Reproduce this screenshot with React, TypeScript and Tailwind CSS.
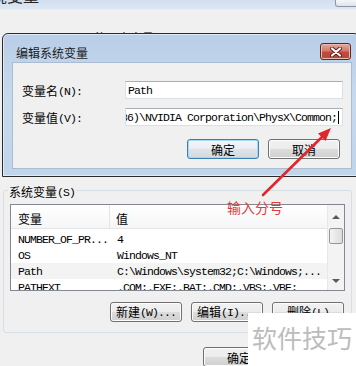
import React from "react";

const MONO = "font-['Liberation_Mono',monospace] text-[11.5px] tracking-[-0.9px]";
const CJK = "relative top-[1px] font-['Noto_Sans_CJK_SC',sans-serif] text-[12px]";

// Mixed text: CJK runs in a CJK face, Latin runs in a 6px-advance mono face
function T({ s, className = "" }: { s: string; className?: string }) {
  const parts = s.split(/([\u4e00-\u9fff]+)/).filter(Boolean);
  return (
    <span className={`whitespace-pre leading-[16px] ${className}`}>
      {parts.map((p, i) =>
        /[\u4e00-\u9fff]/.test(p) ? (
          <span key={i} className={CJK}>
            {p}
          </span>
        ) : (
          <span key={i} className={MONO}>
            {p}
          </span>
        )
      )}
    </span>
  );
}

function Btn({ label, primary = false }: { label: string; primary?: boolean }) {
  return (
    <div
      className={`flex h-[20px] w-[72px] items-center justify-center rounded-[3px] border ${
        primary
          ? "border-[#3c7fb1] bg-[linear-gradient(#f3f6f9_0%,#eaeef2_50%,#dde3e9_50%,#d2d9e0_100%)] shadow-[inset_0_0_0_1px_#a6d8f3]"
          : "border-[#707070] bg-[linear-gradient(#f2f2f2_0%,#ebebeb_50%,#dddddd_50%,#cfcfcf_100%)] shadow-[inset_0_0_0_1px_#fcfcfc]"
      }`}
    >
      <T s={label} />
    </div>
  );
}

function Input({ children, right = false }: { children: React.ReactNode; right?: boolean }) {
  return (
    <div
      className={`flex h-[18px] items-center overflow-hidden whitespace-nowrap border border-[#dbdfe6] border-t-[#abadb3] bg-white ${
        right ? "justify-end pr-[3px]" : "pl-[2px]"
      }`}
    >
      {children}
    </div>
  );
}

const rows = [
  ["NUMBER_OF_PR...", "4"],
  ["OS", "Windows_NT"],
  ["Path", "C:\\Windows\\system32;C:\\Windows;..."],
  ["PATHEXT", ".COM;.EXE;.BAT;.CMD;.VBS;.VBE;"],
];

export default function App() {
  return (
    <div className="relative h-[366px] w-[356px] overflow-hidden bg-[#f0f0f0] text-[12px] leading-[16px] text-black">
      {/* parent window, title bar mostly cropped off */}
      <div className="flex h-[10px] justify-between overflow-hidden border-b border-[#e6edf5] bg-[linear-gradient(#d2dfee,#dde7f3)]">
        <div className="-ml-[9px] -mt-[13px] font-['Noto_Sans_CJK_SC',sans-serif] text-[16px] leading-[16px] text-[#222]">
          境变量
        </div>
        <div className="-mr-[2px] h-[7px] w-[23px] rounded-b-[3px] border border-t-0 border-[#8c98a6] bg-[linear-gradient(#f4f6f9,#dfe4ea)]" />
      </div>
      <div className="h-[31px] overflow-hidden pl-[10px] pt-[19px]">
        <T s="Administrator 的用户变量(U)" />
      </div>

      <fieldset className="ml-[3px] mt-[142px] w-[349px] rounded-[3px] border border-[#d5dfe5] px-[6px] pb-[10px]">
        <legend className="-ml-[2px] flex h-[14px] items-center px-[1px]">
          <T s="系统变量(S)" className="relative top-[2px]" />
        </legend>
        <div className="mt-[7px] flex h-[87px] w-[335px] border border-[#828790] bg-white">
          <div className="flex-1 overflow-hidden">
            <div className="flex h-[24px] items-center border-b border-[#e5e5e5] bg-[linear-gradient(#ffffff,#f5f6f7)]">
              <div className="flex h-full w-[99px] items-center border-r border-[#e3e5e8] pl-[7px] pt-[3px]">
                <T s="变量" />
              </div>
              <div className="pl-[6px] pt-[3px]">
                <T s="值" />
              </div>
            </div>
            <div className="mt-[2px]">
              {rows.map(([k, v]) => (
                <div
                  key={k}
                  className={`flex h-[16px] items-center overflow-hidden ${k === "Path" ? "bg-[#f3f3f3]" : ""}`}
                >
                  <div className="w-[99px] pl-[7px]">
                    <T s={k} />
                  </div>
                  <div className="pl-[7px]">
                    <T s={v} />
                  </div>
                </div>
              ))}
            </div>
          </div>
          {/* vertical scrollbar */}
          <div className="flex w-[17px] flex-col border-l border-[#e8e8e8] bg-[#f3f3f3]">
            <div className="flex h-[23px] items-center justify-center">
              <div className="h-0 w-0 border-x-[4px] border-b-[4px] border-x-transparent border-b-[#5a5a5a]" />
            </div>
            <div className="mx-[1px] h-[16px] rounded-[2px] border border-[#979797] bg-[linear-gradient(90deg,#f4f4f4,#dcdcdc)]" />
            <div className="flex-1" />
            <div className="flex h-[18px] items-center justify-center">
              <div className="h-0 w-0 border-x-[4px] border-t-[4px] border-x-transparent border-t-[#5a5a5a]" />
            </div>
          </div>
        </div>
        <div className="mr-[1px] mt-[11px] flex justify-end gap-[9px]">
          <Btn label="新建(W)..." />
          <Btn label="编辑(I)..." />
          <Btn label="删除(L)" />
        </div>
      </fieldset>

      <div className="mt-[14px] flex gap-[9px] pl-[203px]">
        <Btn label="确定" />
        <Btn label="取消" />
      </div>

      {/* 编辑系统变量 dialog, sits over the parent window */}
      <div className="absolute left-[2px] top-[33px] flex h-[144px] w-[358px] flex-col rounded-t-[6px] border border-[#2b2b2b] bg-[linear-gradient(#b9cee7,#c7d9ed_45%,#c0d4ea)] shadow-[inset_0_0_0_1px_#dfeaf6]">
        <div className="flex h-[28px] items-start justify-between pl-[13px] pr-[8px]">
          <span className="pt-[11px] font-['Noto_Sans_CJK_SC',sans-serif] text-[12px] leading-[16px] text-[#1a1a1a]">
            编辑系统变量
          </span>
          <div className="mt-[9px] flex h-[17px] w-[31px] items-center justify-center rounded-[3px] border border-[#5e2721] bg-[linear-gradient(#e3a99e_0%,#d5796b_45%,#c24a3c_55%,#b9473a_100%)] shadow-[inset_0_0_0_1px_#eab9b0]">
            <svg width="12" height="10" viewBox="0 0 12 10">
              <path d="M2 1.5 L10 8.5 M10 1.5 L2 8.5" stroke="#5a1d17" strokeWidth="4" strokeLinecap="round" />
              <path d="M2 1.5 L10 8.5 M10 1.5 L2 8.5" stroke="#ffffff" strokeWidth="2.2" strokeLinecap="round" />
            </svg>
          </div>
        </div>
        <div className="mb-[7px] ml-[9px] mr-[7px] flex-1 border border-[#a9bcd2] bg-[#f0f0f0]">
          <div className="grid grid-cols-[103px_218px] grid-rows-[18px_18px] items-center gap-y-[9px] pl-[9px] pt-[18px]">
            <T s="变量名(N):" className="pt-[2px]" />
            <Input>
              <T s="Path" />
            </Input>
            <T s="变量值(V):" className="pt-[2px]" />
            <Input right>
              <T s={"C:\\Program Files (x86)\\NVIDIA Corporation\\PhysX\\Common;"} />
              <span className="ml-[1px] h-[13px] w-[1px] shrink-0 bg-black" />
            </Input>
          </div>
          <div className="mt-[13px] flex justify-end gap-[9px] pr-[11px]">
            <Btn label="确定" primary />
            <Btn label="取消" />
          </div>
        </div>
      </div>

      {/* red annotation */}
      <svg className="pointer-events-none absolute inset-0" width="356" height="366" viewBox="0 0 356 366">
        <line x1="263" y1="195" x2="323" y2="136" stroke="#e0262b" strokeWidth="2.6" strokeLinecap="round" />
        <polygon points="331,128 325.5,141 318,133.5" fill="#e0262b" />
      </svg>
      <span className="absolute left-[227px] top-[199px] font-['Noto_Sans_CJK_SC',sans-serif] text-[14px] leading-[16px] text-[#e23a3a]">
        输入分号
      </span>

      {/* watermark */}
      <div className="absolute bottom-0 left-[248px] right-0 top-[313px] bg-white pl-[4px] pt-[12px]">
        <span className="font-['Noto_Sans_CJK_SC',sans-serif] text-[25px] leading-[25px] text-[#bcbcbc]">软件技巧</span>
      </div>
    </div>
  );
}
